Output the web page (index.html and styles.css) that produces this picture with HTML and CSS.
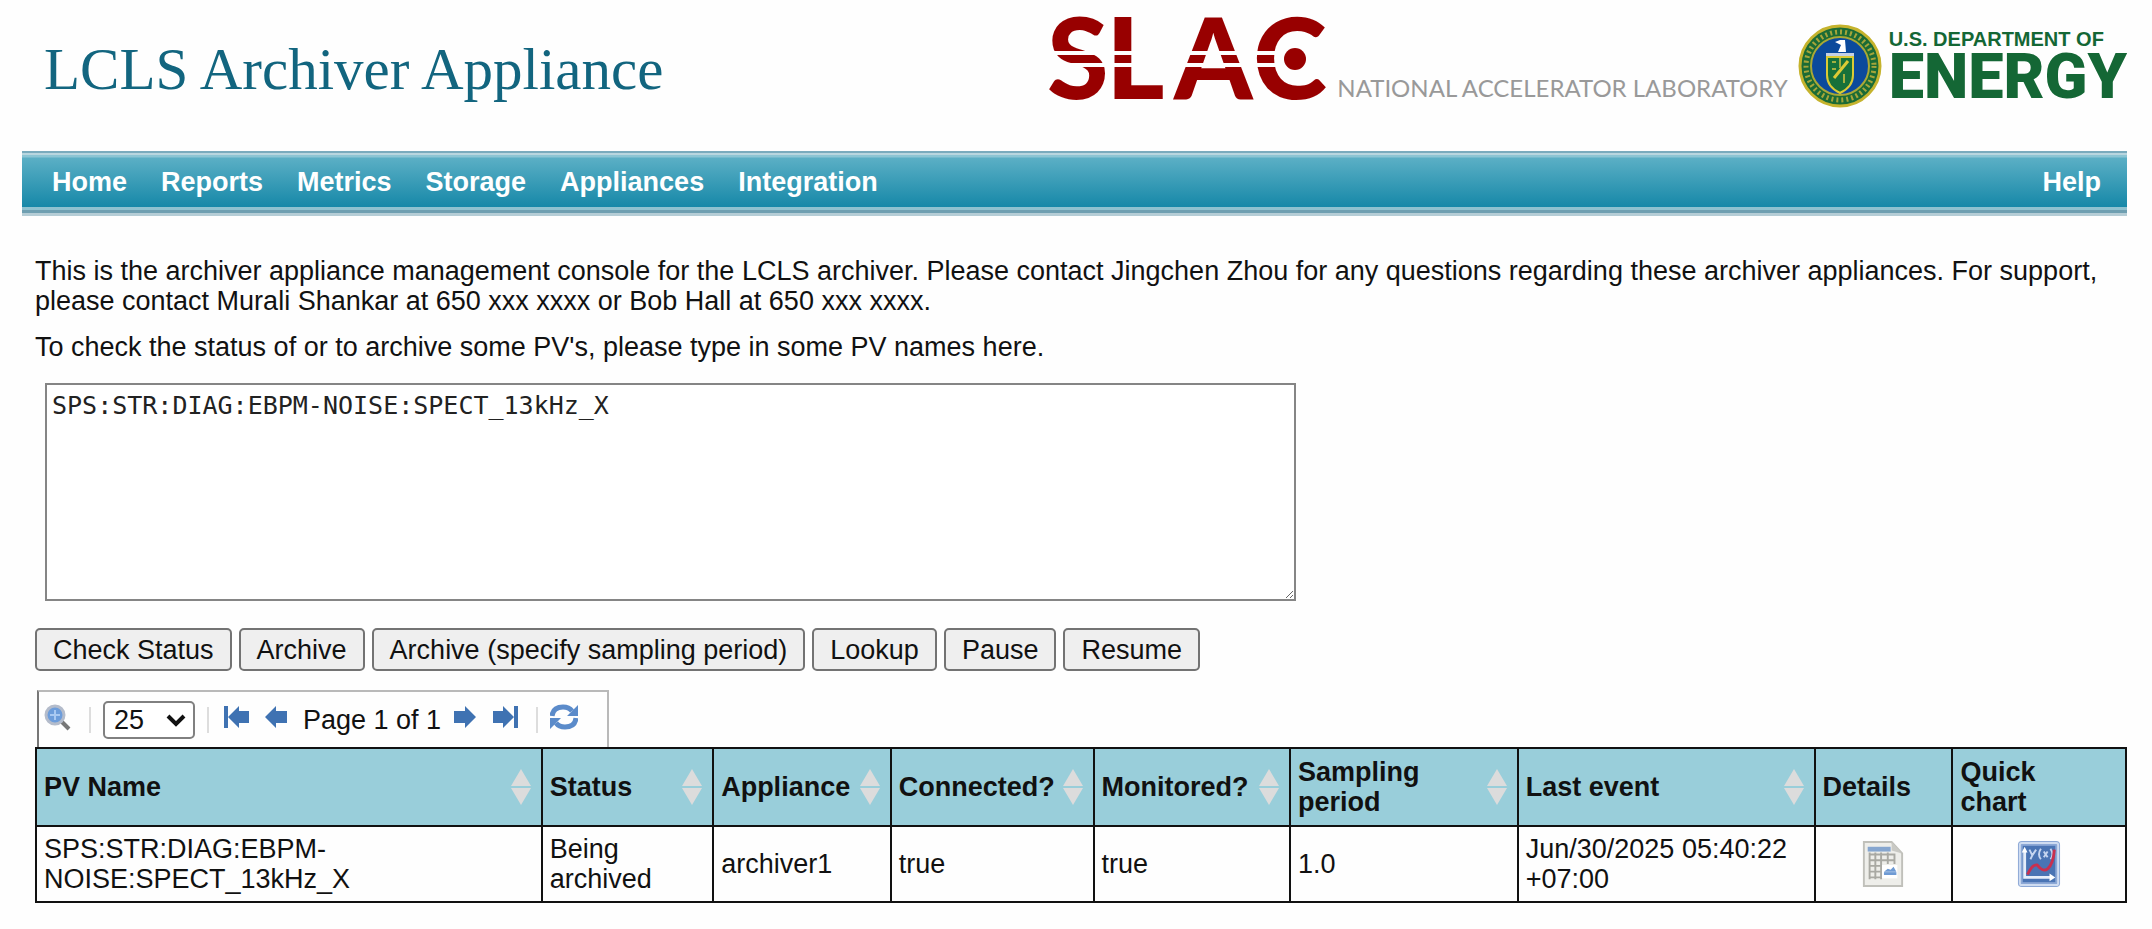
FILE: index.html
```
<!DOCTYPE html>
<html lang="en">
<head>
	<meta charset="UTF-8">
	<title>LCLS Archiver Appliance</title>
	<link rel="stylesheet" href="styles.css">
</head>
<body>
	<header class="pageheader">
		<h1 class="toptitle">LCLS Archiver Appliance</h1>
		<div class="logos">
			<svg class="slaclogo" viewBox="0 0 286 96" role="img" aria-label="SLAC">
				<text class="slactext" x="0 59 127 206" y="86">SLAC</text>
				<path d="M0 40H286M0 52H286" stroke="#fefefe" stroke-width="4"/>
				<circle cx="248" cy="46" r="11" fill="#980000"/>
			</svg>
			<span class="labname">NATIONAL ACCELERATOR LABORATORY</span>
			<svg class="seal" viewBox="0 0 84 84">
				<circle cx="42" cy="42" r="40" fill="#1b6b35" stroke="#c5b32d" stroke-width="3"/>
				<circle cx="42" cy="42" r="34" fill="none" stroke="#a5a53a" stroke-width="5" stroke-dasharray="2 3"/>
				<circle cx="42" cy="42" r="29" fill="#0b4a9c" stroke="#a9a835" stroke-width="2"/>
				<path d="M37 18l5-2h5l1 12h-8l3-7z" fill="#fff"/>
				<path d="M28 29h28v4H28z" fill="#c3d0e6"/>
				<path d="M29 33h26v18q0 12-13 18-13-6-13-18z" fill="#17713a" stroke="#dccb35" stroke-width="2"/>
				<path d="M36 54l14-17" stroke="#dccb35" stroke-width="3"/>
				<path d="M42 34v10M34 38h4M46 50v9M34 45h4" stroke="#a5b040" stroke-width="2"/>
			</svg>
			<div class="doe">
				<span class="doetop">U.S. DEPARTMENT OF</span>
				<span class="doename">ENERGY</span>
			</div>
		</div>
	</header>

	<nav class="menu">
		<a href="#">Home</a>
		<a href="#">Reports</a>
		<a href="#">Metrics</a>
		<a href="#">Storage</a>
		<a href="#">Appliances</a>
		<a href="#">Integration</a>
		<a class="help" href="#">Help</a>
	</nav>

	<main class="content">
		<p>This is the archiver appliance management console for the LCLS archiver. Please contact Jingchen Zhou for any questions regarding these archiver appliances. For support, please contact Murali Shankar at 650 xxx xxxx or Bob Hall at 650 xxx xxxx.</p>
		<p><label for="pvnames">To check the status of or to archive some PV's, please type in some PV names here.</label></p>
		<textarea id="pvnames" class="pvnames" spellcheck="false">SPS:STR:DIAG:EBPM-NOISE:SPECT_13kHz_X</textarea>

		<div class="actions">
			<button type="button">Check Status</button>
			<button type="button">Archive</button>
			<button type="button">Archive (specify sampling period)</button>
			<button type="button">Lookup</button>
			<button type="button">Pause</button>
			<button type="button">Resume</button>
		</div>

		<div class="pager">
			<button type="button" class="icon" aria-label="Search">
				<svg viewBox="0 0 28 28"><path d="M17 17l8 8" stroke="#777" stroke-width="4"/><circle cx="11" cy="11" r="9" fill="#6d9ddb" stroke="#b4bccb" stroke-width="3"/><path d="M11 6v10M6 11h10" stroke="#a9c9f2" stroke-width="2"/></svg>
			</button>
			<span class="sep"></span>
			<select class="pagesize" aria-label="Rows per page">
				<option>25</option>
			</select>
			<span class="sep"></span>
			<button type="button" class="icon" aria-label="First page">
				<svg viewBox="0 0 28 28"><path d="M3 2h4v22H3zM7 13L18 2v5h10v12H18v5z" fill="#3f72b2"/></svg>
			</button>
			<button type="button" class="icon" aria-label="Previous page">
				<svg viewBox="0 0 28 28"><path d="M4 13L15 2v5h11v12H15v5z" fill="#3f72b2"/></svg>
			</button>
			<span class="pagetext">Page 1 of 1</span>
			<button type="button" class="icon" aria-label="Next page">
				<svg viewBox="0 0 28 28"><path d="M25 13L14 2v5H3v12h11v5z" fill="#3f72b2"/></svg>
			</button>
			<button type="button" class="icon" aria-label="Last page">
				<svg viewBox="0 0 28 28"><path d="M27 2h-4v22h4zM23 13L12 2v5H2v12h10v5z" fill="#3f72b2"/></svg>
			</button>
			<span class="sep"></span>
			<button type="button" class="icon" aria-label="Refresh">
				<svg viewBox="0 0 28 28"><path d="M2 12Q3 3 13 3q6 0 9 4M26 14q-1 9-11 9-6 0-9-4" fill="none" stroke="#5b8bca" stroke-width="5"/><path d="M28 1v11H17zM0 25V14h11z" fill="#5b8bca"/></svg>
			</button>
		</div>

		<table class="results">
			<colgroup>
				<col class="c-name"><col class="c-status"><col class="c-appl"><col class="c-conn"><col class="c-mon"><col class="c-samp"><col class="c-last"><col class="c-det"><col>
			</colgroup>
			<thead>
				<tr>
					<th class="sort">PV Name</th>
					<th class="sort">Status</th>
					<th class="sort">Appliance</th>
					<th class="sort">Connected?</th>
					<th class="sort">Monitored?</th>
					<th class="sort">Sampling period</th>
					<th class="sort">Last event</th>
					<th>Details</th>
					<th>Quick<br>chart</th>
				</tr>
			</thead>
			<tbody>
				<tr>
					<td>SPS:STR:DIAG:EBPM-NOISE:SPECT_13kHz_X</td>
					<td>Being archived</td>
					<td>archiver1</td>
					<td>true</td>
					<td>true</td>
					<td>1.0</td>
					<td>Jun/30/2025 05:40:22 +07:00</td>
					<td class="pic"><a href="#" aria-label="Details">
						<svg viewBox="0 0 46 50"><path d="M3 2h29l11 12v34H3z" fill="#eeeeea" stroke="#c0c0ba" stroke-width="2"/><path d="M32 2v9l11 3z" fill="#c9c9c4"/><path d="M7 7h24v5H7z" fill="#86a6cf"/><path d="M8 15h28M8 21h28M8 27h14M8 33h12M8 39h12M9 13v28M15 13v28M21 13v28M28 13v12M35 15v10" stroke="#a9a9a3" stroke-width="2"/><path d="M22 26h16v14H22z" fill="#fff"/><path d="M24 33l4-3 3 1 3-3 3 5z" fill="#6f9bd4"/><path d="M24 35h13" stroke="#6f9bd4" stroke-width="3"/></svg>
					</a></td>
					<td class="pic"><a href="#" aria-label="Quick chart">
						<svg viewBox="0 0 46 50"><rect x="1" y="1" width="44" height="48" rx="4" fill="#8ca8d6"/><rect x="3" y="3" width="40" height="44" rx="2" fill="none" stroke="#cfdcf1" stroke-width="2"/><rect x="6" y="6" width="34" height="38" fill="#4a74b4"/><path d="M8 10v29h28" fill="none" stroke="#e6eefa" stroke-width="3"/><path d="M34 35l6 4-6 4zM5 13l3-6 3 6z" fill="#fff"/><path d="M13 10l3 6 4-6M16 16l-2 4M25 9q-4 6 0 11M28 12l4 6M32 12l-4 6M35 9q4 6 0 11" fill="none" stroke="#c5d5f0" stroke-width="2"/><path d="M11 36q5-11 10-10 6 8 11 4 6-5 7-20" fill="none" stroke="#c9304f" stroke-width="3"/></svg>
					</a></td>
				</tr>
			</tbody>
		</table>
	</main>
</body>
</html>
```
FILE: styles.css
```
*{box-sizing: border-box;}
body{margin: 0 25px 0 22px;background: #fefefe;color: #111;font: 27px/30px "Liberation Sans", Arial, sans-serif;}
.pageheader{display: flex;justify-content: space-between;height: 151px;}
.toptitle{margin: 36px 0 0 22px;color: #12657f;font: 59px/66px "Liberation Serif", "Times New Roman", serif;white-space: nowrap;}
.logos{display: flex;align-items: flex-start;}
.slaclogo{width: 286px;height: 96px;margin: 13px 4px 0 0;overflow: visible;}
.slactext{fill: #980000;font: 900 112px Lato, sans-serif;}
.labname{margin: 73px 10px 0 0;color: #999;font: 24px/30px Lato, sans-serif;white-space: nowrap;}
.seal{width: 84px;height: 84px;margin: 24px 7px 0 0;}
.doe{display: flex;flex-direction: column;margin-top: 28px;color: #146735;white-space: nowrap;}
.doetop{font: bold 20px/22px "Liberation Sans", Arial, sans-serif;}
.doename{font: 900 63px/54px Roboto, sans-serif;}

.menu{display: flex;gap: 34px;height: 65px;padding: 11px 26px 0 30px;border-top: 2px solid #7aabbd;border-bottom: 3px solid #b5cdd6;background: linear-gradient(#b9d6df 0, #b9d6df 2px, #8cc5d4 2px, #8cc5d4 4px, #5bafc5 5px, #1688a8 54px, #8ec2d0 54px, #8ec2d0 57px, #6f9fb1 57px);}
.menu a{color: #fff;font-weight: bold;line-height: 36px;text-decoration: none;}
.menu .help{margin-left: auto;}

.content{padding: 40px 0 0 13px;}
.content p{margin: 0 0 16px 0;}
.pvnames{display: block;width: 59.8%;height: 218px;margin: 21px 0 27px 10px;padding: 6px 5px;border: 2px solid #858585;background: #fff;color: #222;font: 25px/30px "DejaVu Sans Mono", monospace;}
.actions{display: flex;gap: 7px;}
.actions button{height: 43px;padding: 0 16px;border: 2px solid #737373;border-radius: 5px;background: #efefef;color: #111;font: inherit;}

.pager{display: flex;align-items: center;width: 572px;height: 57px;margin: 19px 0 0 2px;padding: 0 5px;border: 2px solid #b9b9b9;border-left-color: #777;border-bottom: 0;}
.icon{display: flex;flex: none;margin: 0 12px 4px 0;padding: 0;border: 0;background: none;}
.icon svg{width: 28px;height: 28px;}
.sep{flex: none;width: 2px;height: 26px;margin: 0 12px 0 5px;background: #ddd;}
.pagesize{width: 92px;height: 38px;margin-right: 7px;padding: 0 9px;border: 2px solid #808080;border-radius: 5px;background: #fff url("data:image/svg+xml,%3Csvg xmlns='http://www.w3.org/2000/svg' width='20' height='14'%3E%3Cpath d='M2 3L10 11L18 3' fill='none' stroke='%23111' stroke-width='4'/%3E%3C/svg%3E") no-repeat right 7px center;color: #111;font: inherit;appearance: none;}
.pagetext{margin: 0 10px 0 2px;white-space: nowrap;}

.results{width: 100%;border-collapse: collapse;table-layout: fixed;}
.results th, .results td{border: 2px solid #111;padding: 7px;text-align: left;vertical-align: middle;}
.results th{height: 78px;background: #99ceda;}
.results td{height: 76px;}
.results .sort{padding-right: 30px;background: #99ceda url("data:image/svg+xml,%3Csvg xmlns='http://www.w3.org/2000/svg' width='20' height='36'%3E%3Cpath d='M10 0L20 17H0zM0 19H20L10 36z' fill='%23dcdcdc'/%3E%3C/svg%3E") no-repeat right 10px center;}
.results .pic{padding: 0;text-align: center;}
.pic svg{display: block;width: 44px;height: 50px;margin: 0 auto;}
.c-name{width: 24.2%;}
.c-status{width: 8.2%;}
.c-appl{width: 8.5%;}
.c-conn{width: 9.7%;}
.c-mon{width: 9.4%;}
.c-samp{width: 10.9%;}
.c-last{width: 14.2%;}
.c-det{width: 6.6%;}
```
